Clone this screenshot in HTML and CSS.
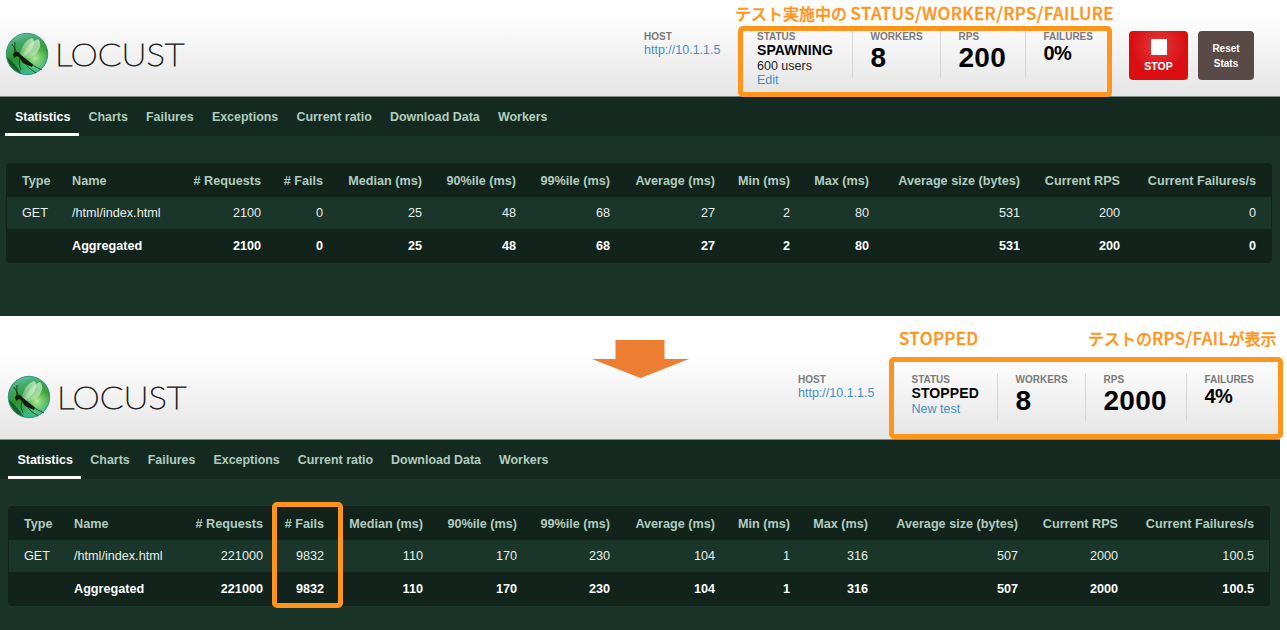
FILE: index.html
```html
<!DOCTYPE html>
<html lang="ja">
<head>
<meta charset="utf-8">
<title>Locust</title>
<link rel="stylesheet" href="styles.css">
</head>
<body>
<svg class="defs" width="0" height="0" aria-hidden="true">
  <defs>
    <linearGradient id="ball" x1="0" y1="0" x2="0.3" y2="1">
      <stop offset="0" stop-color="#6fd0cb"/><stop offset=".25" stop-color="#49ad72"/><stop offset=".62" stop-color="#2b932a"/><stop offset="1" stop-color="#35b98c"/>
    </linearGradient>
    <radialGradient id="glow" cx=".7" cy=".6" r=".42">
      <stop offset="0" stop-color="#b4eb98"/><stop offset="1" stop-color="#6ccb55" stop-opacity="0"/>
    </radialGradient>
    <linearGradient id="wing" x1="1" y1="0" x2="0" y2="1">
      <stop offset="0" stop-color="#e2f7df" stop-opacity=".7"/><stop offset="1" stop-color="#cdf0c6" stop-opacity=".3"/>
    </linearGradient>
    <symbol id="logo" viewBox="0 0 182 44">
      <circle cx="22" cy="22" r="20.7" fill="url(#ball)" stroke="#2c8b7c" stroke-width=".9"/>
      <circle cx="22" cy="22" r="20" fill="url(#glow)"/>
      <path d="M2 25 Q5 38 17 42 Q10 31 2 25Z" fill="#093f12" opacity=".65"/>
      <path d="M15 22 Q18 9 27 6 Q31 8 27 17 Q22 24 17 25Z" fill="url(#wing)"/>
      <path d="M17 24 Q24 10 33 7 Q38 11 32 21 Q26 27 18 26Z" fill="url(#wing)"/>
      <path d="M8 22 Q10 19 13 20 L16 23 21 27 28 32.5 27 35 18 31 14 25 12 24 9 26Z" fill="#111a13"/>
      <path d="M10 21 Q10 15 7 12 M11 20 Q9 15 10 10 M15 26 L14 32 16 38 M19 30 L24 36 31 41 M24 31 L31 35 37 38" fill="none" stroke="#132018" stroke-width=".7"/>
      <text x="50" y="33.6" class="wordmark" textLength="129.5" lengthAdjust="spacingAndGlyphs">LOCUST</text>
    </symbol>
  </defs>
</svg>

<main class="sheet">
  <section class="panel panel-running">
    <header class="top">
      <svg class="logo"><use href="#logo"/></svg>
      <div class="stat host"><b class="label">HOST</b><a class="line">http://10.1.1.5</a></div>
      <div class="stat"><b class="label">STATUS</b><b class="state">SPAWNING</b><span class="line users">600 users</span><a class="line edit">Edit</a></div>
      <div class="stat ruled"><b class="label">WORKERS</b><b class="big">8</b></div>
      <div class="stat ruled"><b class="label">RPS</b><b class="big">200</b></div>
      <div class="stat ruled"><b class="label">FAILURES</b><b class="pct">0%</b></div>
      <div class="stop"><i class="square"></i>STOP</div>
      <div class="reset">Reset<br>Stats</div>
    </header>
    <nav class="tabs"><a class="on">Statistics</a><a>Charts</a><a>Failures</a><a>Exceptions</a><a>Current ratio</a><a>Download Data</a><a>Workers</a></nav>
    <div class="body">
      <table class="stats">
        <colgroup><col class="c1"><col class="c2"><col class="c3"><col class="c4"><col class="c5"><col class="c6"><col class="c7"><col class="c8"><col class="c9"><col class="c10"><col class="c11"><col class="c12"><col class="c13"><col></colgroup>
        <thead><tr><th>Type</th><th>Name</th><th># Requests</th><th># Fails</th><th>Median (ms)</th><th>90%ile (ms)</th><th>99%ile (ms)</th><th>Average (ms)</th><th>Min (ms)</th><th>Max (ms)</th><th>Average size (bytes)</th><th>Current RPS</th><th>Current Failures/s</th><th></th></tr></thead>
        <tbody>
          <tr><td>GET</td><td>/html/index.html</td><td>2100</td><td>0</td><td>25</td><td>48</td><td>68</td><td>27</td><td>2</td><td>80</td><td>531</td><td>200</td><td>0</td><td></td></tr>
          <tr class="total"><td></td><td>Aggregated</td><td>2100</td><td>0</td><td>25</td><td>48</td><td>68</td><td>27</td><td>2</td><td>80</td><td>531</td><td>200</td><td>0</td><td></td></tr>
        </tbody>
      </table>
    </div>
  </section>

  <section class="panel panel-stopped">
    <header class="top">
      <svg class="logo"><use href="#logo"/></svg>
      <div class="stat host"><b class="label">HOST</b><a class="line">http://10.1.1.5</a></div>
      <div class="stat"><b class="label">STATUS</b><b class="state">STOPPED</b><a class="line users">New test</a></div>
      <div class="stat ruled"><b class="label">WORKERS</b><b class="big">8</b></div>
      <div class="stat ruled"><b class="label">RPS</b><b class="big">2000</b></div>
      <div class="stat ruled"><b class="label">FAILURES</b><b class="pct">4%</b></div>
    </header>
    <nav class="tabs"><a class="on">Statistics</a><a>Charts</a><a>Failures</a><a>Exceptions</a><a>Current ratio</a><a>Download Data</a><a>Workers</a></nav>
    <div class="body">
      <table class="stats">
        <colgroup><col class="c1"><col class="c2"><col class="c3"><col class="c4"><col class="c5"><col class="c6"><col class="c7"><col class="c8"><col class="c9"><col class="c10"><col class="c11"><col class="c12"><col class="c13"><col></colgroup>
        <thead><tr><th>Type</th><th>Name</th><th># Requests</th><th># Fails</th><th>Median (ms)</th><th>90%ile (ms)</th><th>99%ile (ms)</th><th>Average (ms)</th><th>Min (ms)</th><th>Max (ms)</th><th>Average size (bytes)</th><th>Current RPS</th><th>Current Failures/s</th><th></th></tr></thead>
        <tbody>
          <tr><td>GET</td><td>/html/index.html</td><td>221000</td><td>9832</td><td>110</td><td>170</td><td>230</td><td>104</td><td>1</td><td>316</td><td>507</td><td>2000</td><td>100.5</td><td></td></tr>
          <tr class="total"><td></td><td>Aggregated</td><td>221000</td><td>9832</td><td>110</td><td>170</td><td>230</td><td>104</td><td>1</td><td>316</td><td>507</td><td>2000</td><td>100.5</td><td></td></tr>
        </tbody>
      </table>
    </div>
  </section>

  <div class="note note-running">テスト実施中の <span class="latin">STATUS/WORKER/RPS/FAILURE</span></div>
  <div class="note note-stopped"><span class="latin">STOPPED</span></div>
  <div class="note note-result">テストの<span class="latin">RPS/FAIL</span>が表示</div>
  <div class="frame frame-running"></div>
  <div class="frame frame-stopped"></div>
  <div class="frame frame-fails"></div>
  <svg class="arrow" viewBox="0 0 97 38"><path d="M23.5 0H72.5V19H97L48.5 38 0 19H23.5Z" fill="#ed7d31"/></svg>
</main>
</body>
</html>
```

FILE: styles.css
```css
* { box-sizing: border-box; }
body { margin: 0; background: #fff; font-family: "Liberation Sans", Arial, "Noto Sans CJK JP", sans-serif; overflow: hidden; }
.defs { position: absolute; }
.sheet { position: relative; width: 1287px; height: 630px; overflow: hidden; }
.panel { width: 1280px; display: flex; flex-direction: column; }
.panel-running { height: 316px; }
.panel-stopped { height: 314px; }

/* header strip */
.top { display: grid; align-items: start; flex: none; border-bottom: 1px solid #7f8f88; }
.panel-running .top { height: 97px; padding-top: 31px; grid-template-columns: 644px 113px 95px 88px 85px 104px 69px 56px; background: linear-gradient(#fff 12px, #e5e5e5 95px); }
.panel-stopped .top { height: 124px; padding-top: 58px; grid-template-columns: 798px 113.5px 85.5px 88px 101px 94px; background: linear-gradient(#fff 38px, #e5e5e5 122px); }
.logo { width: 182px; height: 44px; margin: 1px 0 0 5px; }
.panel-stopped .logo { margin: 1px 0 0 7px; }
.wordmark { font-family: Lato, sans-serif; font-weight: 100; font-size: 32px; fill: #222; stroke: #222; stroke-width: 1px; }
.stat { display: flex; flex-direction: column; height: 47px; white-space: nowrap; }
.ruled { border-left: 1px solid #d5d5d5; padding-left: 17.5px; }
.label { font-size: 10px; line-height: 12px; color: #7b7b7b; }
.line { font-size: 12.5px; line-height: 14px; color: #222; }
a.line { color: #4590c4; }
.users { margin-top: 2px; }
.state { font-size: 14px; line-height: 14px; letter-spacing: .1px; color: #000; }
.state + .users { margin-top: 2px; }
.big { font-size: 28px; line-height: 30px; letter-spacing: .3px; color: #000; }
.pct { font-size: 20px; line-height: 22px; margin-top: -1px; letter-spacing: -.6px; color: #000; }
.stop, .reset { border-radius: 4px; color: #fff; font-weight: bold; text-align: center; display: flex; flex-direction: column; align-items: center; }
.stop { width: 59px; height: 49px; padding-top: 8px; gap: 5px; line-height: 13px; font-size: 10.5px; background: radial-gradient(circle at 50% 30%, #e23c3c, #d90f12 60%); }
.square { width: 16px; height: 16px; background: #fff; }
.reset { width: 56px; height: 49px; display: block; padding-top: 10px; line-height: 15px; background: #594a48; font-size: 10px; }

/* tab bar */
.tabs { display: flex; flex: none; height: 39px; padding-left: 5px; background: #14291f; font-size: 12.45px; font-weight: bold; color: #b0ccbe; }
.tabs a { padding: 1px 9.1px 0; line-height: 39px; white-space: nowrap; }
.tabs .on { color: #fff; border-bottom: 3px solid #fff; padding: 1px 9px 0 10px; }
.panel-stopped .tabs { padding-left: 8px; }
.panel-stopped .tabs a { padding: 1px 9px 0; }
.panel-stopped .tabs .on { padding: 1px 8.5px 0 9.5px; }
.body { flex: 1; background: #1a342a; }
.panel-running .body { padding: 27px 0 0 6px; }
.panel-stopped .body { padding: 27px 0 0 8px; }

/* request table */
.stats { width: 1266px; table-layout: fixed; border-collapse: separate; border-spacing: 0; border: solid #12231c; border-width: 0 1px 2px; border-radius: 4px; background: #12231c; font-size: 12.65px; color: #e9efec; }
.panel-stopped .stats { width: 1262px; }
.stats th, .stats td { padding: 0; height: 32px; text-align: right; white-space: nowrap; line-height: 16px; }
.stats th { height: 34px; padding-top: 1px; color: #b0ccbe; }
.stats th:first-child, .stats td:first-child { padding-left: 15px; text-align: left; }
.stats th:nth-child(2), .stats td:nth-child(2) { text-align: left; }
.stats tbody tr { background: #1a352a; }
.stats .total { background: #12231c; font-weight: bold; color: #fff; }
.stats .total td { padding-top: 1px; }
.c1 { width: 65px; } .c2 { width: 100px; } .c3 { width: 89px; } .c4 { width: 62px; }
.c5 { width: 99px; } .c6 { width: 94px; } .c7 { width: 94px; } .c8 { width: 105px; }
.c9 { width: 75px; } .c10 { width: 79px; } .c11 { width: 151px; } .c12 { width: 100px; } .c13 { width: 136px; }
.panel-stopped .c4 { width: 61px; } .panel-stopped .c7 { width: 93px; }
.panel-stopped .c10 { width: 78px; } .panel-stopped .c11 { width: 150px; }

/* annotations laid over the panels */
.note { position: absolute; white-space: nowrap; font: 500 16px/20px "Noto Sans CJK JP", sans-serif; color: #ff951c; -webkit-text-stroke: .35px #ff951c; }
.latin { font-size: 17px; letter-spacing: .4px; }
.note-running { left: 735px; top: 3px; }
.note-stopped { left: 899px; top: 328px; }
.note-result { left: 1088px; top: 328px; }
.frame { position: absolute; border: 5px solid #ff951c; border-radius: 5px; }
.frame-running { left: 738px; top: 26px; width: 374px; height: 71px; }
.frame-stopped { left: 889px; top: 357px; width: 394px; height: 82px; }
.frame-fails { left: 272px; top: 502px; width: 71px; height: 106px; }
.arrow { position: absolute; left: 592px; top: 340px; width: 97px; height: 38px; }
```
